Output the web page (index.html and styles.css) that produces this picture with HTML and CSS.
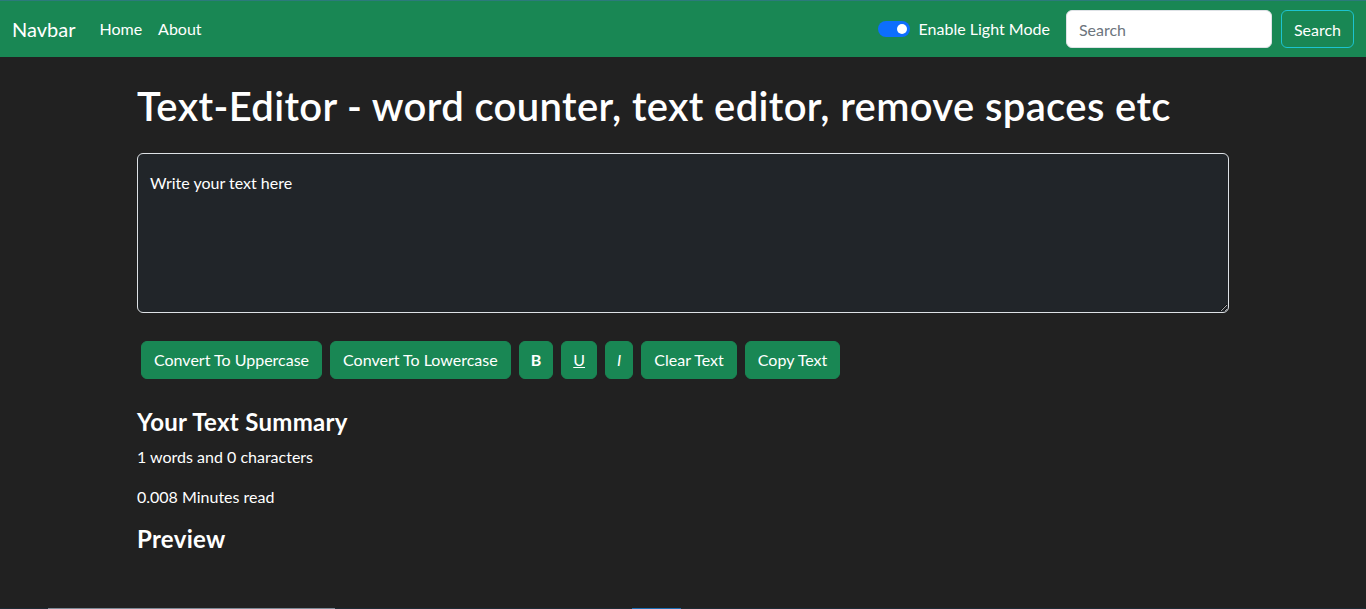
FILE: index.html
```html
<!DOCTYPE html>
<html lang="en">
<head>
<meta charset="utf-8">
<title>Text-Editor</title>
<link rel="stylesheet" href="styles.css">
</head>
<body>
<nav class="navbar">
  <div class="nav-left">
    <a class="brand" href="#">Navbar</a>
    <a class="nav-link" href="#">Home</a>
    <a class="nav-link" href="#">About</a>
  </div>
  <div class="nav-right">
    <label class="switch-wrap">
      <span class="switch"><span class="knob"></span></span>
      <span class="switch-label">Enable Light Mode</span>
    </label>
    <form class="search-form">
      <input class="search-input" type="search" placeholder="Search">
      <button class="search-btn" type="button">Search</button>
    </form>
  </div>
</nav>

<main class="container">
  <h1 class="title">Text-Editor - word counter, text editor, remove spaces etc</h1>
  <textarea class="editor" rows="6">Write your text here</textarea>
  <div class="actions">
    <button class="btn">Convert To Uppercase</button>
    <button class="btn">Convert To Lowercase</button>
    <button class="btn btn-sq"><b>B</b></button>
    <button class="btn btn-sq"><u>U</u></button>
    <button class="btn btn-sq"><i>I</i></button>
    <button class="btn">Clear Text</button>
    <button class="btn">Copy Text</button>
  </div>
  <section class="summary">
    <h4 class="sub">Your Text Summary</h4>
    <p class="line">1 words and 0 characters</p>
    <p class="line">0.008 Minutes read</p>
    <h4 class="sub">Preview</h4>
  </section>
</main>

<div class="edge-strip">
  <span class="edge-gray"></span>
  <span class="edge-blue"></span>
</div>
</body>
</html>
```

FILE: styles.css
```css
* { box-sizing: border-box; }

html, body {
  margin: 0;
  padding: 0;
}

body {
  background: #212121;
  color: #ffffff;
  font-family: Lato, "Liberation Sans", sans-serif;
  font-size: 16px;
  line-height: 1.5;
  height: 609px;
  overflow: hidden;
}

/* ---------- navbar ---------- */
.navbar {
  height: 57px;
  background: #198754;
  border-top: 1px solid #2c7a7c;
  display: flex;
  align-items: center;
  justify-content: space-between;
  padding: 0 12px;
}

.nav-left {
  display: flex;
  align-items: center;
}

.brand {
  color: #fff;
  text-decoration: none;
  font-size: 20px;
  line-height: 30px;
  margin-right: 16px;
}

.nav-link {
  color: #fff;
  text-decoration: none;
  padding: 8px;
  font-size: 16px;
}

.nav-right {
  display: flex;
  align-items: center;
}

.switch-wrap {
  display: flex;
  align-items: center;
  gap: 9px;
  margin-right: 16px;
}

.switch {
  width: 32px;
  height: 16px;
  border-radius: 8px;
  background: #0d6efd;
  display: flex;
  align-items: center;
  justify-content: flex-end;
  padding: 0 3px;
}

.knob {
  width: 10px;
  height: 10px;
  border-radius: 50%;
  background: #fff;
}

.switch-label {
  font-size: 16px;
}

.search-form {
  display: flex;
  align-items: center;
  gap: 9px;
}

.search-input {
  width: 206px;
  height: 38px;
  border: 1px solid #dee2e6;
  border-radius: 6px;
  background: #fff;
  padding: 6px 12px;
  font-family: inherit;
  font-size: 16px;
  color: #212529;
}

.search-input::placeholder {
  color: #6c757d;
}

.search-btn {
  height: 38px;
  padding: 6px 12px;
  background: transparent;
  border: 1px solid #1cc4d0;
  border-radius: 6px;
  color: #fff;
  font-family: inherit;
  font-size: 16px;
}

/* ---------- content ---------- */
.container {
  width: 1092px;
  margin: 0 auto;
  padding-top: 25px;
}

.title {
  margin: 0 0 23px;
  font-size: 40px;
  font-weight: 600;
  line-height: 48px;
  letter-spacing: 0.35px;
}

.editor {
  display: block;
  width: 100%;
  height: 160px;
  background: #212529;
  color: #fff;
  border: 1px solid #dee2e6;
  border-radius: 6px;
  padding: 17px 12px;
  font-family: inherit;
  font-size: 16px;
  line-height: 24px;
}

.actions {
  display: flex;
  flex-wrap: wrap;
  margin-top: 28px;
}

.btn {
  margin: 0 4px;
  height: 38px;
  padding: 6px 12px;
  background: #198754;
  border: 1px solid #198754;
  border-radius: 6px;
  color: #fff;
  font-family: inherit;
  font-size: 16px;
  line-height: 24px;
}

.btn-sq {
  padding: 6px 11px;
}

.btn b { font-weight: 700; }

.summary {
  padding-top: 29px;
}

.sub {
  margin: 0 0 8px;
  font-size: 24px;
  font-weight: 700;
  line-height: 28.8px;
  letter-spacing: 0.3px;
}

.line {
  margin: 0 0 16px;
  line-height: 24px;
}

/* bottom 1px edge */
.edge-strip {
  position: fixed;
  left: 0;
  right: 0;
  bottom: 0;
  height: 1px;
  background: #1e2a33;
}

.edge-gray {
  position: absolute;
  left: 48px;
  width: 287px;
  height: 1px;
  background: #7d8b97;
}

.edge-blue {
  position: absolute;
  left: 632px;
  width: 49px;
  height: 1px;
  background: #1a6fb3;
}
```
